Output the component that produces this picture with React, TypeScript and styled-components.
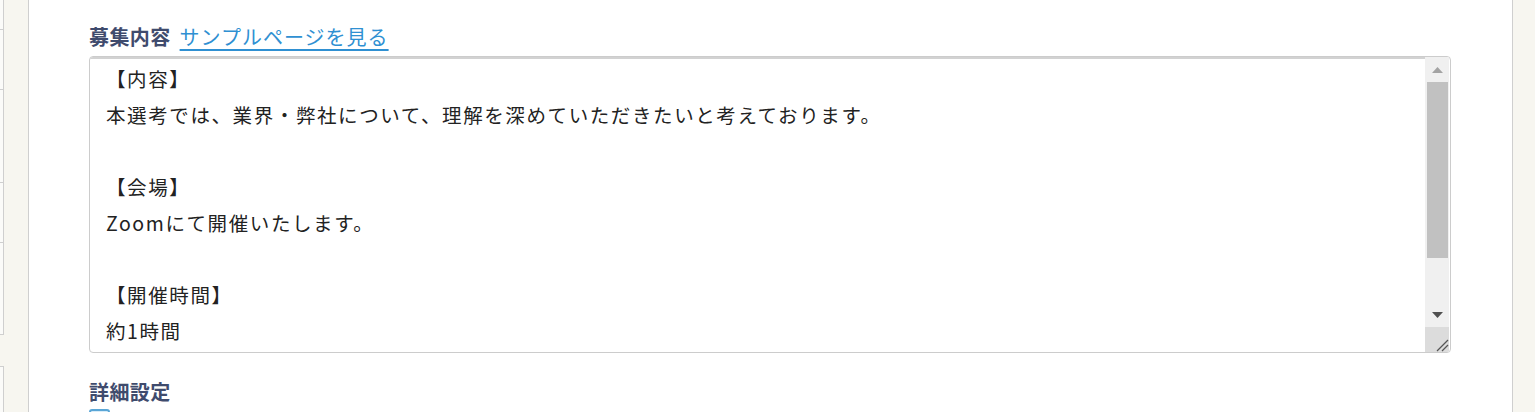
import React from "react";
import styled, { createGlobalStyle } from "styled-components";

const GlobalStyle = createGlobalStyle`
  html, body {
    margin: 0;
    padding: 0;
    background: #f7f6f0;
    overflow: hidden;
  }
  body {
    font-family: "Noto Sans CJK JP", "Noto Sans", sans-serif;
  }
`;

const Page = styled.div`
  display: flex;
  width: 1535px;
  height: 412px;
  background: #f7f6f0;
  overflow: hidden;
`;

const SideTable = styled.div`
  width: 4px;
  display: flex;
  flex-direction: column;
`;

const SideCell = styled.div<{ $h: number; $empty?: boolean }>`
  height: ${(p) => p.$h}px;
  flex-shrink: 0;
  box-sizing: border-box;
  background: ${(p) => (p.$empty ? "transparent" : "#fbfbf9")};
  border-right: ${(p) => (p.$empty ? "none" : "1px solid #cfcfcf")};
  border-bottom: 1px solid #cfcfcf;
`;

const Gutter = styled.div<{ $w: number }>`
  width: ${(p) => p.$w}px;
  flex-shrink: 0;
`;

const Panel = styled.main`
  width: 1485px;
  flex-shrink: 0;
  box-sizing: border-box;
  background: #ffffff;
  border-left: 1px solid #cfcfcf;
  border-right: 1px solid #cfcfcf;
  padding: 22px 61px 0 60px;
`;

const FieldLabelRow = styled.div`
  display: flex;
  align-items: baseline;
  gap: 9px;
  height: 30px;
  line-height: 30px;
  margin-bottom: 4px;
`;

const FieldLabel = styled.span`
  font-size: 20px;
  font-weight: 700;
  color: #3f4b6d;
  letter-spacing: 0.4px;
`;

const SampleLink = styled.a`
  font-size: 20px;
  color: #2f90d2;
  text-decoration: underline;
  text-underline-offset: 4px;
  text-decoration-thickness: 1.5px;
  letter-spacing: 1px;
  cursor: pointer;
`;

const TextBox = styled.div`
  display: flex;
  height: 297px;
  box-sizing: border-box;
  border: 1px solid #cccccc;
  border-radius: 4px;
  overflow: hidden;
  background: #fff;
`;

const TextContent = styled.div`
  flex: 1;
  box-shadow: inset 0 2px 0 #d2d2d2;
  padding: 4px 16px 0 16px;
  overflow: hidden;
  font-size: 19.5px;
  line-height: 36px;
  letter-spacing: 1.6px;
  color: #222;
  font-weight: 400;
`;

const Line = styled.div`
  height: 36px;
  white-space: pre;
`;

const ScrollBar = styled.div`
  width: 24px;
  display: flex;
  flex-direction: column;
  background: #f0f0f0;
  margin-right: 1px;
`;

const ArrowButton = styled.div`
  height: 25px;
  display: flex;
  align-items: center;
  justify-content: center;
  flex-shrink: 0;
`;

const Track = styled.div`
  flex: 1;
  display: flex;
  flex-direction: column;
  padding: 0 1px 0 2px;
`;

const Thumb = styled.div`
  height: 176px;
  background: #c1c1c1;
`;

const Resizer = styled.div`
  height: 25px;
  flex-shrink: 0;
  background: #dcdcdc;
  display: flex;
  align-items: flex-end;
  justify-content: flex-end;
`;

const SectionTitle = styled.h3`
  margin: 24px 0 0;
  font-size: 20px;
  font-weight: 700;
  color: #3f4b6d;
  line-height: 30px;
  height: 30px;
  letter-spacing: 0.4px;
`;

const CheckBox = styled.div`
  width: 21px;
  height: 21px;
  margin-top: 2px;
  box-sizing: border-box;
  border: 2px solid #5aa6d6;
  border-radius: 3px;
  background: #d8ecf8;
`;

const lines = [
  "【内容】",
  "本選考では、業界・弊社について、理解を深めていただきたいと考えております。",
  "",
  "【会場】",
  "Zoomにて開催いたします。",
  "",
  "【開催時間】",
  "約1時間",
  "",
];

export default function App() {
  return (
    <>
      <GlobalStyle />
      <Page>
        <SideTable>
          <SideCell $h={30} />
          <SideCell $h={60} />
          <SideCell $h={93} />
          <SideCell $h={60} />
          <SideCell $h={92} />
          <SideCell $h={32} $empty />
          <SideCell $h={60} />
        </SideTable>
        <Gutter $w={24} />
        <Panel>
          <FieldLabelRow>
            <FieldLabel>募集内容</FieldLabel>
            <SampleLink>サンプルページを見る</SampleLink>
          </FieldLabelRow>
          <TextBox>
            <TextContent>
              {lines.map((l, i) => (
                <Line key={i}>{l}</Line>
              ))}
            </TextContent>
            <ScrollBar>
              <ArrowButton>
                <svg width="11" height="6" viewBox="0 0 11 6">
                  <polygon points="0,6 11,6 5.5,0" fill="#a3a3a3" />
                </svg>
              </ArrowButton>
              <Track>
                <Thumb />
              </Track>
              <ArrowButton>
                <svg width="11" height="6" viewBox="0 0 11 6">
                  <polygon points="0,0 11,0 5.5,6" fill="#505050" />
                </svg>
              </ArrowButton>
              <Resizer>
                <svg width="14" height="14" viewBox="0 0 14 14">
                  <line x1="2" y1="13" x2="13" y2="2" stroke="#555" strokeWidth="1.2" />
                  <line x1="7" y1="13" x2="13" y2="7" stroke="#555" strokeWidth="1.2" />
                </svg>
              </Resizer>
            </ScrollBar>
          </TextBox>
          <SectionTitle>詳細設定</SectionTitle>
          <CheckBox />
        </Panel>
        <Gutter $w={22} />
      </Page>
    </>
  );
}
